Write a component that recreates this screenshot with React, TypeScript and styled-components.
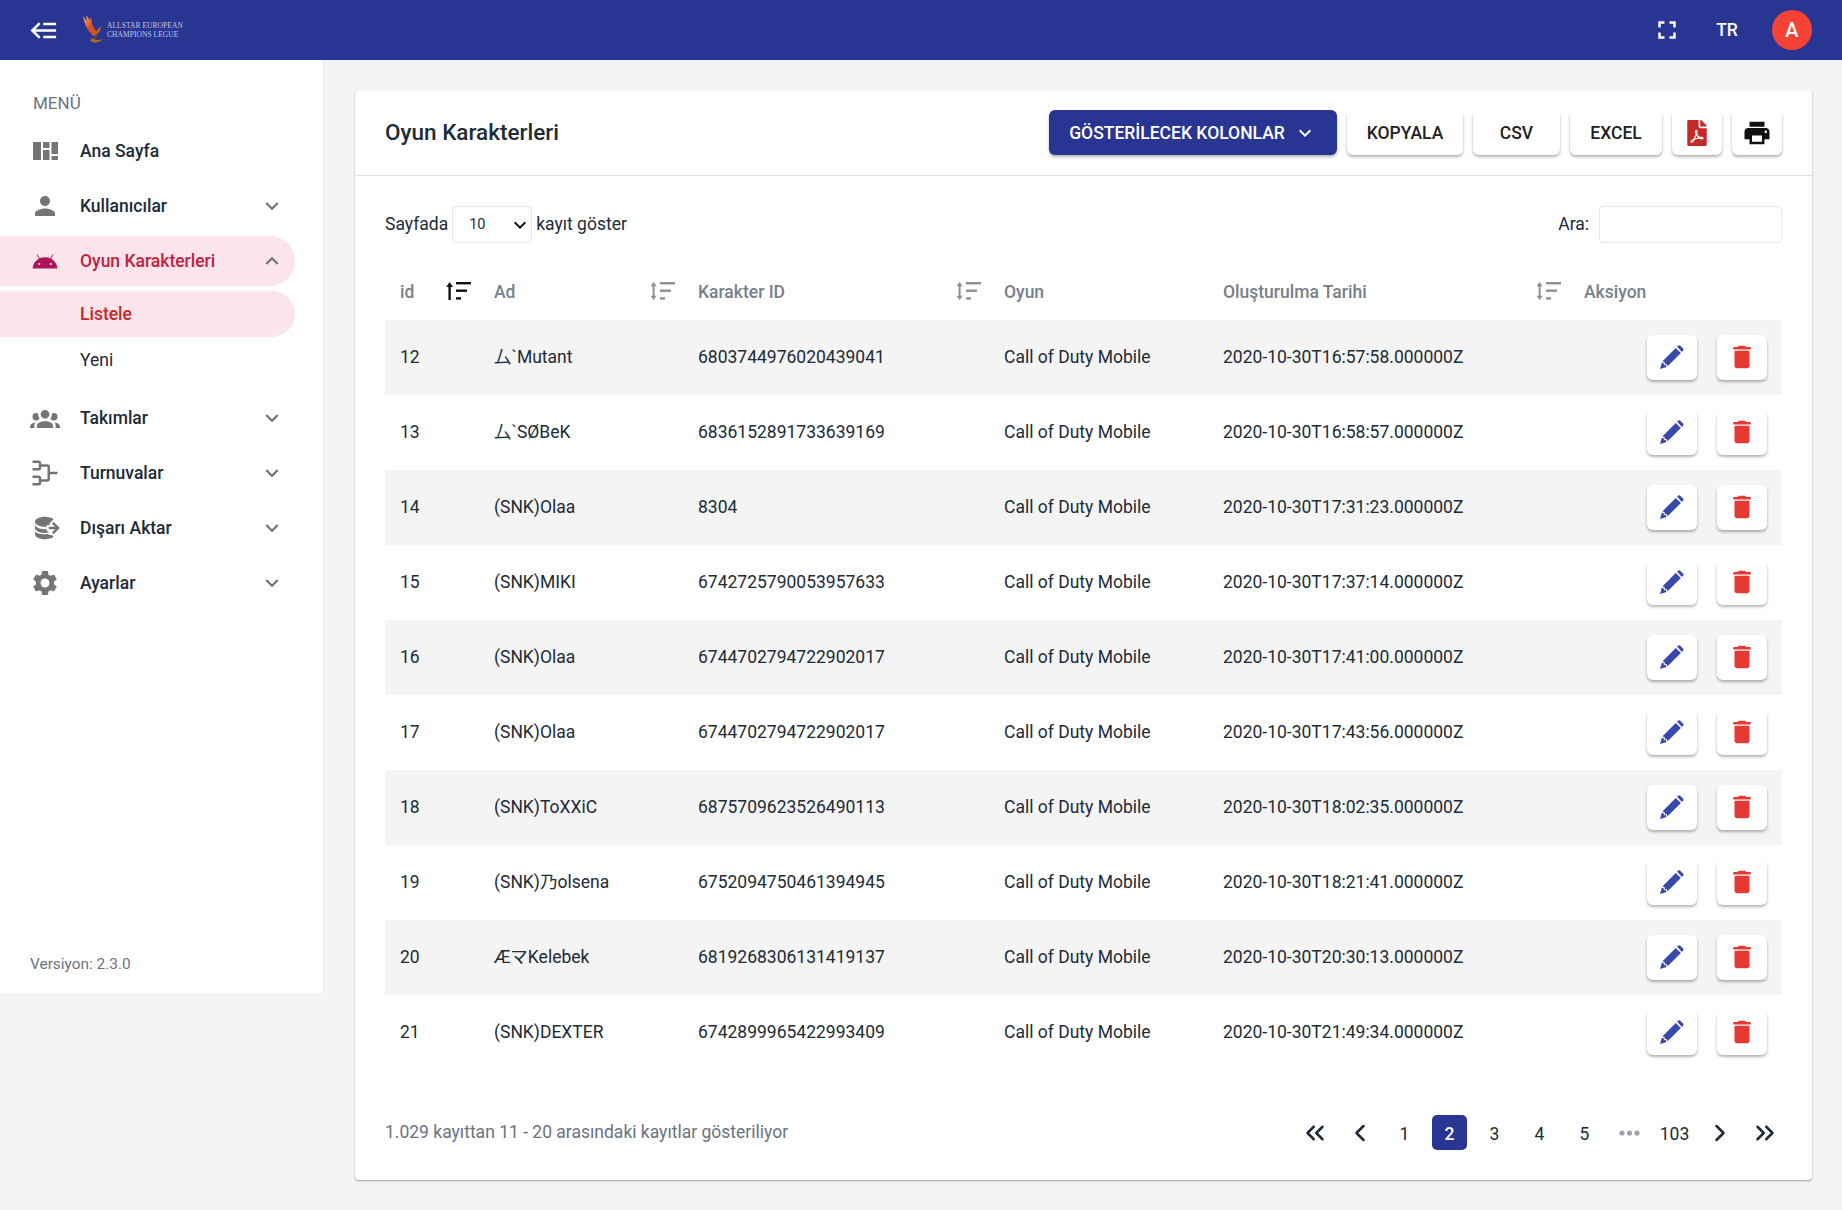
import React from "react";
import styled, { createGlobalStyle } from "styled-components";
import { MdKeyboardArrowDown, MdKeyboardArrowUp, MdPerson, MdSettings, MdPrint, MdDelete, MdFullscreen } from "react-icons/md";
import { FaFilePdf } from "react-icons/fa";
import { ChevronLeft, ChevronRight, ChevronsLeft, ChevronsRight } from "lucide-react";

const Global = createGlobalStyle`
  html, body { margin: 0; padding: 0; background: #f4f4f4; }
  body { font-family: Roboto, "Noto Sans CJK JP", sans-serif; color: #212b36; }
  * { box-sizing: border-box; }
`;

const Shell = styled.div`width: 1842px; min-height: 1210px; display: flex; flex-direction: column;`;
const TopBar = styled.header`
  height: 60px; background: #283593; display: flex; align-items: center;
  padding: 0 30px 0 29px; color: #fff;
`;
const BackIcon = styled.svg`width: 31px; height: 31px; fill: #fff; display: block;`;
const Logo = styled.div`display: flex; align-items: center; margin-left: 22px; height: 34px;`;
const LogoMark = styled.svg`width: 27px; height: 32px; display: block;`;
const LogoText = styled.div`
  margin-left: -2px; font-family: "Liberation Serif", serif; font-size: 7.4px; line-height: 9.5px;
  letter-spacing: .12px; color: #c3c7e2; white-space: nowrap; text-transform: uppercase;
`;
const Spacer = styled.div`flex: 1;`;
const FullBtn = styled.div`width: 30px; height: 30px; display: flex; align-items: center; justify-content: center; margin-right: 30px;`;
const Lang = styled.div`font-size: 17.5px; font-weight: 500; width: 30px; text-align: center; margin-right: 30px;`;
const Avatar = styled.div`
  width: 40px; height: 40px; border-radius: 50%; background: #f44336; color: #fff;
  display: flex; align-items: center; justify-content: center; font-size: 20px; font-weight: 500;
`;

const Body = styled.div`display: flex; align-items: flex-start; flex: 1;`;
const Sidebar = styled.aside`
  width: 324px; height: 933px; background: #fff; border-right: 1px solid #ececec;
  display: flex; flex-direction: column; padding-top: 31px;
`;
const MenuLabel = styled.div`
  font-size: 17px; color: #6b7280; padding-left: 33px; height: 25px; line-height: 25px; margin-bottom: 10px;
`;
const MenuList = styled.nav`display: flex; flex-direction: column; flex: 1; width: 295px;`;
const MenuItem = styled.div<{ $active?: boolean }>`
  height: 50px; margin-bottom: 5px; display: flex; align-items: center; padding: 0 10px 0 30px;
  border-radius: 0 25px 25px 0; font-size: 17.5px; font-weight: 500;
  background: ${p => (p.$active ? "#fbe4ec" : "transparent")};
  color: ${p => (p.$active ? "#c2213f" : "#212b36")};
`;
const MenuIcon = styled.span<{ $color?: string }>`
  width: 30px; height: 30px; display: flex; align-items: center; justify-content: center;
  color: ${p => p.$color || "#757575"}; margin-right: 20px; flex: none;
  svg { display: block; fill: currentColor; }
`;
const MenuText = styled.span`flex: 1;`;
const MenuArrow = styled.span`display: flex; color: #6b7280;`;
const SubList = styled.div`display: flex; flex-direction: column; margin-bottom: 10px;`;
const SubItem = styled.div<{ $active?: boolean }>`
  height: 46px; display: flex; align-items: center; padding-left: 80px; border-radius: 0 25px 25px 0;
  font-size: 17.5px; font-weight: ${p => (p.$active ? 500 : 400)};
  background: ${p => (p.$active ? "#fbe4ec" : "transparent")};
  color: ${p => (p.$active ? "#c62828" : "#212b36")};
`;
const Version = styled.div`font-size: 15.4px; color: #6b7280; padding: 0 0 19px 30px; line-height: 20px;`;

const Main = styled.main`flex: 1; padding: 30px 30px 30px 31px;`;
const Card = styled.section`
  background: #fff; border-radius: 4px; box-shadow: 0 1px 2px rgba(0,0,0,.35); height: 1090px;
  display: flex; flex-direction: column;
`;
const CardHead = styled.div`
  height: 86px; border-bottom: 1px solid #e0e0e0; padding: 0 30px; display: flex; align-items: center;
  justify-content: space-between;
`;
const Title = styled.h1`margin: -2px 0 0; font-size: 22.5px; font-weight: 500; color: #212b36;`;
const Actions = styled.div`display: flex; gap: 10px;`;
const ToolBtn = styled.button<{ $w: number; $primary?: boolean }>`
  width: ${p => p.$w}px; height: 45px; border: 0; border-radius: 6px; padding: 0; cursor: pointer;
  font-family: inherit; font-size: 17.5px; font-weight: 500; display: flex; align-items: center; justify-content: center;
  background: ${p => (p.$primary ? "#283593" : "#fff")}; color: ${p => (p.$primary ? "#fff" : "#212121")};
  box-shadow: 0 2px 3px rgba(0,0,0,.3);
  svg { display: block; }
`;
const CaretGap = styled.span`display: flex; margin-left: 8px;`;

const CardBody = styled.div`flex: 1; padding: 30px 30px 30px; display: flex; flex-direction: column;`;
const Controls = styled.div`display: flex; justify-content: space-between; align-items: center; height: 37px; font-size: 17.5px;`;
const Group = styled.label`display: flex; align-items: center; gap: 4px; line-height: 20px;`;
const GroupText = styled.span`margin-top: -2px;`;
const SelectWrap = styled.span`
  position: relative; display: block; width: 80px; height: 37px;
  svg { position: absolute; right: 0; top: 7px; pointer-events: none; color: #111; }
`;
const Select = styled.select`
  appearance: none; width: 80px; height: 37px; border: 1px solid #e6e6e6; border-radius: 4px; background: #fff; padding: 0 0 0 16px;
  font-family: inherit; font-size: 14.5px; color: #212b36; outline: none; display: block;
`;
const SearchGroup = styled(Group)`gap: 10px;`;
const Search = styled.input`width: 183px; height: 37px; border: 1px solid #e6e6e6; border-radius: 4px; background: #fff; outline: none;`;

const Table = styled.table`
  width: 1397px; table-layout: fixed; border-collapse: collapse; margin-top: 19px; font-size: 17.5px;
`;
const Col = styled.col<{ $w: number }>`width: ${p => p.$w}px;`;
const Th = styled.th`height: 58px; padding: 2px 0 0; text-align: left; font-weight: 500; color: #78808c;`;
const ThInner = styled.div`display: flex; align-items: center; justify-content: space-between; padding: 0 8px 0 15px;`;
const SortIcon = styled.svg`width: 25px; height: 18px; display: block; margin-top: -3px;`;
const Tr = styled.tr<{ $odd: boolean }>`height: 75px; background: ${p => (p.$odd ? "#f4f4f4" : "#fff")};`;
const Td = styled.td`padding: 0 15px 2px; line-height: 20px; color: #212b36; white-space: nowrap; overflow: visible;`;
const ActionTd = styled.td`padding: 0 15px;`;
const RowActions = styled.div`display: flex; justify-content: flex-end; gap: 20px;`;
const IconBtn = styled.button<{ $color: string }>`
  width: 50px; height: 45px; border: 0; border-radius: 6px; background: #fff; padding: 0 0 2px; color: ${p => p.$color};
  box-shadow: 0 2px 3px rgba(0,0,0,.3); display: flex; align-items: center; justify-content: center;
  svg { display: block; }
`;
const PencilSvg = styled.svg`width: 24px; height: 24px; fill: currentColor;`;

const Footer = styled.div`margin-top: 45px; display: flex; justify-content: space-between; align-items: center; height: 35px;`;
const Info = styled.div`font-size: 17.5px; color: #6b7280; margin-top: -1px;`;
const Pager = styled.div`display: flex; gap: 10px;`;
const Page = styled.div<{ $active?: boolean }>`
  width: 35px; height: 35px; border-radius: 5px; display: flex; align-items: center; justify-content: center; padding-top: 2px;
  font-size: 17.5px; background: ${p => (p.$active ? "#283593" : "transparent")};
  color: ${p => (p.$active ? "#fff" : "#212b36")}; font-weight: ${p => (p.$active ? 500 : 400)};
  svg { display: block; margin-top: -2px; }
`;
const Dots = styled(Page)`color: #9ca3af; font-size: 15px; svg { fill: #9ca3af; }`;

const Sort = ({ active }: { active?: boolean }) => {
  const c = active ? "#111" : "#8b9099";
  return (
    <SortIcon viewBox="0 0 25 18">
      {active ? (
        <path d="M3.6 0 7 5H4.8v13H2.4V5H.2z" fill={c} />
      ) : (
        <path d="M3.6 0 6.6 4.2H4.6v9.6h2L3.6 18 .6 13.8h2V4.2h-2z" fill={c} />
      )}
      <rect x="10" y="0" width="15" height="2.4" fill={c} />
      <rect x="10" y="7.5" width="11" height="2.4" fill={c} />
      <rect x="10" y="15.2" width="5" height="2.4" fill={c} />
    </SortIcon>
  );
};

const PencilIcon = () => (
  <PencilSvg viewBox="0 0 24 24">
    <path d="M17 1.6 18.5.5Q19.5 0 20.5 1L23 3.5Q24 4.5 23.2 5.5L21.9 7Z" />
    <path d="M15.8 2.9 20.9 8 7.6 21.3 6.7 19 4.7 19.4 4.9 17.4 2.6 16.2Z" />
    <path d="M1.9 17.5 3.9 18.4 3.8 20.3 5.8 20.1 6.5 22 0 24Z" />
  </PencilSvg>
);

const QuiltIcon = () => (
  <svg width="25" height="18" viewBox="0 0 25 18">
    <rect x="0" y="0" width="8" height="18" />
    <rect x="10" y="0" width="6.5" height="6" />
    <rect x="10" y="8" width="6.5" height="10" />
    <rect x="18.5" y="0" width="6.5" height="12" />
    <rect x="18.5" y="14" width="6.5" height="4" />
  </svg>
);
const AndroidIcon = () => (
  <svg width="30" height="30" viewBox="0 0 24 24">
    <path d="M16.61 15.15C16.15 15.15 15.77 14.78 15.77 14.32S16.15 13.5 16.61 13.5H16.61C17.07 13.5 17.45 13.86 17.45 14.32C17.45 14.78 17.07 15.15 16.61 15.15M7.41 15.15C6.95 15.15 6.57 14.78 6.57 14.32C6.57 13.86 6.95 13.5 7.41 13.5H7.41C7.87 13.5 8.24 13.86 8.24 14.32C8.24 14.78 7.87 15.15 7.41 15.15M16.91 10.14L18.58 7.26C18.67 7.09 18.61 6.88 18.45 6.79C18.28 6.69 18.07 6.75 18 6.92L16.29 9.83C14.95 9.22 13.5 8.9 12 8.91C10.47 8.91 9 9.24 7.73 9.82L6.04 6.91C5.95 6.74 5.74 6.68 5.57 6.78C5.4 6.87 5.35 7.08 5.44 7.25L7.1 10.13C4.25 11.69 2.29 14.58 2 18H22C21.72 14.59 19.77 11.7 16.91 10.14H16.91Z" fillRule="evenodd" />
  </svg>
);
const GroupIcon = () => (
  <svg width="30" height="30" viewBox="0 0 24 24">
    <path d="M12,5.5A3.5,3.5 0 0,1 15.5,9A3.5,3.5 0 0,1 12,12.5A3.5,3.5 0 0,1 8.5,9A3.5,3.5 0 0,1 12,5.5M5,8C5.56,8 6.08,8.15 6.53,8.42C6.38,9.85 6.8,11.27 7.66,12.38C7.16,13.34 6.16,14 5,14A3,3 0 0,1 2,11A3,3 0 0,1 5,8M19,8A3,3 0 0,1 22,11A3,3 0 0,1 19,14C17.84,14 16.84,13.34 16.34,12.38C17.2,11.27 17.62,9.85 17.47,8.42C17.92,8.15 18.44,8 19,8M5.5,18.25C5.5,16.18 8.41,14.5 12,14.5C15.59,14.5 18.5,16.18 18.5,18.25V20H5.5V18.25M0,20V18.5C0,17.11 1.89,15.94 4.45,15.6C3.86,16.28 3.5,17.22 3.5,18.25V20H0M24,20H20.5V18.25C20.5,17.22 20.14,16.28 19.55,15.6C22.11,15.94 24,17.11 24,18.5V20Z" />
  </svg>
);
const TournamentIcon = () => (
  <svg width="30" height="30" viewBox="0 0 24 24">
    <path d="M2,2V4H7V8H2V10H7C8.11,10 9,9.11 9,8V7H14V17H9V16C9,14.89 8.11,14 7,14H2V16H7V20H2V22H7C8.11,22 9,21.11 9,20V19H14C15.11,19 16,18.11 16,17V13H22V11H16V7C16,5.89 15.11,5 14,5H9V4C9,2.89 8.11,2 7,2H2Z" />
  </svg>
);
const ExportIcon = () => (
  <svg width="30" height="30" viewBox="0 0 24 24">
    <path d="M12,3C7.58,3 4,4.79 4,7C4,9.21 7.58,11 12,11C12.5,11 13,10.97 13.5,10.92V9.5H16.39L15.39,8.5L18.9,5C17.5,3.8 14.94,3 12,3M18.92,7.08L17.5,8.5L20,11H15V13H20L17.5,15.5L18.92,16.92L23.84,12M4,9V12C4,14.21 7.58,16 12,16C13.18,16 14.32,15.87 15.35,15.63L14.34,14.5H13.5V12.92C13,12.97 12.5,13 12,13C7.58,13 4,11.21 4,9M4,14V17C4,19.21 7.58,21 12,21C14.94,21 17.5,20.2 18.9,19L17.5,17.5H15.39L14.39,16.5C13.61,16.73 12.75,16.92 12,16.97C7.58,17 4,16.21 4,14Z" />
  </svg>
);

const rows: [number, string, string, string][] = [
  [12, "厶`Mutant", "6803744976020439041", "2020-10-30T16:57:58.000000Z"],
  [13, "厶`SØBeK", "6836152891733639169", "2020-10-30T16:58:57.000000Z"],
  [14, "(SNK)Olaa", "8304", "2020-10-30T17:31:23.000000Z"],
  [15, "(SNK)MIKI", "6742725790053957633", "2020-10-30T17:37:14.000000Z"],
  [16, "(SNK)Olaa", "6744702794722902017", "2020-10-30T17:41:00.000000Z"],
  [17, "(SNK)Olaa", "6744702794722902017", "2020-10-30T17:43:56.000000Z"],
  [18, "(SNK)ToXXiC", "6875709623526490113", "2020-10-30T18:02:35.000000Z"],
  [19, "(SNK)乃olsena", "6752094750461394945", "2020-10-30T18:21:41.000000Z"],
  [20, "ÆマKelebek", "6819268306131419137", "2020-10-30T20:30:13.000000Z"],
  [21, "(SNK)DEXTER", "6742899965422993409", "2020-10-30T21:49:34.000000Z"],
];

const Item = ({ icon, label }: { icon: React.ReactNode; label: string }) => (
  <MenuItem>
    <MenuIcon>{icon}</MenuIcon>
    <MenuText>{label}</MenuText>
    <MenuArrow><MdKeyboardArrowDown size={26} /></MenuArrow>
  </MenuItem>
);

export default function App() {
  return (
    <Shell>
      <Global />
      <TopBar>
        <BackIcon viewBox="0 0 24 24">
          <path d="M5,13L9,17L7.6,18.42L1.18,12L7.6,5.58L9,7L5,11H21V13H5M21,6V8H11V6H21M21,16V18H11V16H21Z" />
        </BackIcon>
        <Logo>
          <LogoMark viewBox="0 0 27 32">
            <defs>
              <linearGradient id="ph" x1="0" y1="0" x2="1" y2="1">
                <stop offset="0" stopColor="#e8b070" />
                <stop offset=".5" stopColor="#d9501e" />
                <stop offset="1" stopColor="#b5661c" />
              </linearGradient>
            </defs>
            <path d="M1 2 5 7 4 1 8 6 9 3 10 10 14 17 19 12 18 17 14 21 11 22 6 16 3 10Z" fill="url(#ph)" />
            <path d="M8 26C11 30 17 29 21 25 18 26 13 27 11 24Z" fill="#b86a1e" />
            <path d="M12 22 14 27 15 22Z" fill="#8f3a2a" />
          </LogoMark>
          <LogoText>Allstar European<br />Champions Legue</LogoText>
        </Logo>
        <Spacer />
        <FullBtn><MdFullscreen size={30} /></FullBtn>
        <Lang>TR</Lang>
        <Avatar>A</Avatar>
      </TopBar>
      <Body>
        <Sidebar>
          <MenuLabel>MENÜ</MenuLabel>
          <MenuList>
            <MenuItem>
              <MenuIcon><QuiltIcon /></MenuIcon>
              <MenuText>Ana Sayfa</MenuText>
            </MenuItem>
            <Item icon={<MdPerson size={30} />} label="Kullanıcılar" />
            <MenuItem $active>
              <MenuIcon $color="#ad1457"><AndroidIcon /></MenuIcon>
              <MenuText>Oyun Karakterleri</MenuText>
              <MenuArrow><MdKeyboardArrowUp size={26} /></MenuArrow>
            </MenuItem>
            <SubList>
              <SubItem $active>Listele</SubItem>
              <SubItem>Yeni</SubItem>
            </SubList>
            <Item icon={<GroupIcon />} label="Takımlar" />
            <Item icon={<TournamentIcon />} label="Turnuvalar" />
            <Item icon={<ExportIcon />} label="Dışarı Aktar" />
            <Item icon={<MdSettings size={30} />} label="Ayarlar" />
          </MenuList>
          <Version>Versiyon: 2.3.0</Version>
        </Sidebar>
        <Main>
          <Card>
            <CardHead>
              <Title>Oyun Karakterleri</Title>
              <Actions>
                <ToolBtn $w={288} $primary>
                  GÖSTERİLECEK KOLONLAR
                  <CaretGap><MdKeyboardArrowDown size={24} /></CaretGap>
                </ToolBtn>
                <ToolBtn $w={116}>KOPYALA</ToolBtn>
                <ToolBtn $w={87}>CSV</ToolBtn>
                <ToolBtn $w={92}>EXCEL</ToolBtn>
                <ToolBtn $w={50}><FaFilePdf size={26} color="#c62828" /></ToolBtn>
                <ToolBtn $w={50}><MdPrint size={30} color="#111" /></ToolBtn>
              </Actions>
            </CardHead>
            <CardBody>
              <Controls>
                <Group>
                  <GroupText>Sayfada</GroupText>
                  <SelectWrap>
                    <Select defaultValue="10"><option>10</option><option>25</option><option>50</option></Select>
                    <MdKeyboardArrowDown size={24} />
                  </SelectWrap>
                  <GroupText>kayıt göster</GroupText>
                </Group>
                <SearchGroup><GroupText>Ara:</GroupText><Search /></SearchGroup>
              </Controls>
              <Table>
                <colgroup>
                  <Col $w={94} /><Col $w={204} /><Col $w={306} /><Col $w={219} /><Col $w={361} /><Col $w={213} />
                </colgroup>
                <thead>
                  <tr>
                    <Th><ThInner>id<Sort active /></ThInner></Th>
                    <Th><ThInner>Ad<Sort /></ThInner></Th>
                    <Th><ThInner>Karakter ID<Sort /></ThInner></Th>
                    <Th><ThInner>Oyun</ThInner></Th>
                    <Th><ThInner>Oluşturulma Tarihi<Sort /></ThInner></Th>
                    <Th><ThInner>Aksiyon</ThInner></Th>
                  </tr>
                </thead>
                <tbody>
                  {rows.map((r, i) => (
                    <Tr key={r[0]} $odd={i % 2 === 0}>
                      <Td>{r[0]}</Td>
                      <Td>{r[1]}</Td>
                      <Td>{r[2]}</Td>
                      <Td>Call of Duty Mobile</Td>
                      <Td>{r[3]}</Td>
                      <ActionTd>
                        <RowActions>
                          <IconBtn $color="#3949ab"><PencilIcon /></IconBtn>
                          <IconBtn $color="#e53935"><MdDelete size={30} /></IconBtn>
                        </RowActions>
                      </ActionTd>
                    </Tr>
                  ))}
                </tbody>
              </Table>
              <Footer>
                <Info>1.029 kayıttan 11 - 20 arasındaki kayıtlar gösteriliyor</Info>
                <Pager>
                  <Page><ChevronsLeft size={30} strokeWidth={2} /></Page>
                  <Page><ChevronLeft size={28} strokeWidth={2.2} /></Page>
                  <Page>1</Page>
                  <Page $active>2</Page>
                  <Page>3</Page>
                  <Page>4</Page>
                  <Page>5</Page>
                  <Dots>
                    <svg width="21" height="6" viewBox="0 0 21 6"><circle cx="3" cy="3" r="2.6" /><circle cx="10.5" cy="3" r="2.6" /><circle cx="18" cy="3" r="2.6" /></svg>
                  </Dots>
                  <Page>103</Page>
                  <Page><ChevronRight size={28} strokeWidth={2.2} /></Page>
                  <Page><ChevronsRight size={30} strokeWidth={2} /></Page>
                </Pager>
              </Footer>
            </CardBody>
          </Card>
        </Main>
      </Body>
    </Shell>
  );
}
